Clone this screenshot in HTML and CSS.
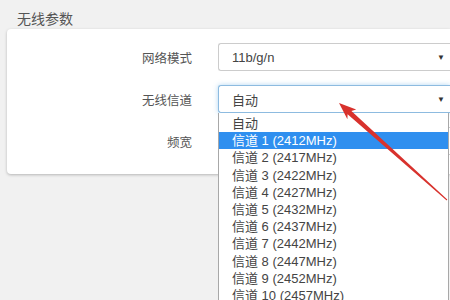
FILE: index.html
```html
<!DOCTYPE html>
<html lang="zh-CN">

<head>
    <meta charset="UTF-8">
    <meta name="viewport" content="width=device-width, initial-scale=1.0">

    <link rel="stylesheet" href="styles.css">
</head>

<body>
    <div class="title">无线参数</div>
    <div class="card">
        <div class="row">
            <label class="label">网络模式</label>
            <div class="select">
                <span>11b/g/n</span>
                <span class="caret">▼</span>
            </div>
        </div>

        <div class="row">
            <label class="label">无线信道</label>
            <div class="select-wrap">
                <div class="select focused">
                    <span>自动</span>
                    <span class="caret">▼</span>
                </div>
                <ul class="dropdown">
                    <li>自动</li>
                    <li class="active">信道 1 (2412MHz)</li>
                    <li>信道 2 (2417MHz)</li>
                    <li>信道 3 (2422MHz)</li>
                    <li>信道 4 (2427MHz)</li>
                    <li>信道 5 (2432MHz)</li>
                    <li>信道 6 (2437MHz)</li>
                    <li>信道 7 (2442MHz)</li>
                    <li>信道 8 (2447MHz)</li>
                    <li>信道 9 (2452MHz)</li>
                    <li>信道 10 (2457MHz)</li>
                </ul>
            </div>
        </div>

        <div class="row">
            <label class="label">频宽</label>
            <!-- covered by the open channel list -->
            <div class="select"></div>
        </div>
    </div>

    <svg class="annotation" width="450" height="300" viewBox="0 0 450 300">
        <polygon fill="#d8322d"
            points="339,103 356.2,109.6 351.4,111.0 447.3,199.6 446.7,200.4 347.6,114.3 347.4,119.3" />
    </svg>
</body>

</html>
```

FILE: styles.css
```css
* {
    margin: 0;
    padding: 0;
    box-sizing: border-box;
}

body {
    font-family: 'Liberation Sans', 'Noto Sans CJK SC', sans-serif;
    background: #f1f1f1;
    width: 450px;
    height: 300px;
    overflow: hidden;
    position: relative;
}

.title {
    height: 29px;
    padding: 8px 0 0 17px;
    font-size: 14px;
    color: #555;
}

.card {
    margin-left: 7px;
    width: 443px;
    height: 145px;
    padding-top: 14px;
    background: #fff;
    border-radius: 4px 0 0 4px;
    box-shadow: 0 1px 3px rgba(0, 0, 0, 0.25);
}

.row {
    display: flex;
    align-items: center;
    gap: 26px;
    height: 28px;
    margin-bottom: 14px;
}

.label {
    width: 185px;
    text-align: right;
    font-size: 12.5px;
    color: #555;
}

.select-wrap {
    position: relative;
    z-index: 2;
}

.select {
    width: 232px;
    height: 28px;
    display: flex;
    align-items: center;
    justify-content: space-between;
    padding: 0 5px 0 13px;
    border: 1px solid #ccc;
    border-right: none;
    border-radius: 3px 0 0 3px;
    font-size: 13px;
    color: #444;
    background: #fff;
}

.select.focused {
    border-color: #8dbbe0;
    box-shadow: 0 0 5px rgba(102, 175, 233, 0.5);
}

.caret {
    font-size: 8px;
    color: #333;
}

.dropdown {
    position: absolute;
    top: 100%;
    left: 0;
    width: 231px;
    height: 187px;
    list-style: none;
    background: #fff;
    border: 1px solid #a8a8a8;
    border-top: none;
    border-bottom: none;
    padding-top: 2px;
    overflow: hidden;
}

.dropdown li {
    height: 17.2px;
    line-height: 17.2px;
    padding-left: 13px;
    font-size: 13px;
    color: #444;
}

.dropdown li.active {
    background: #2f8fef;
    color: #fff;
}

.annotation {
    position: absolute;
    top: 0;
    left: 0;
    z-index: 5;
}
```
